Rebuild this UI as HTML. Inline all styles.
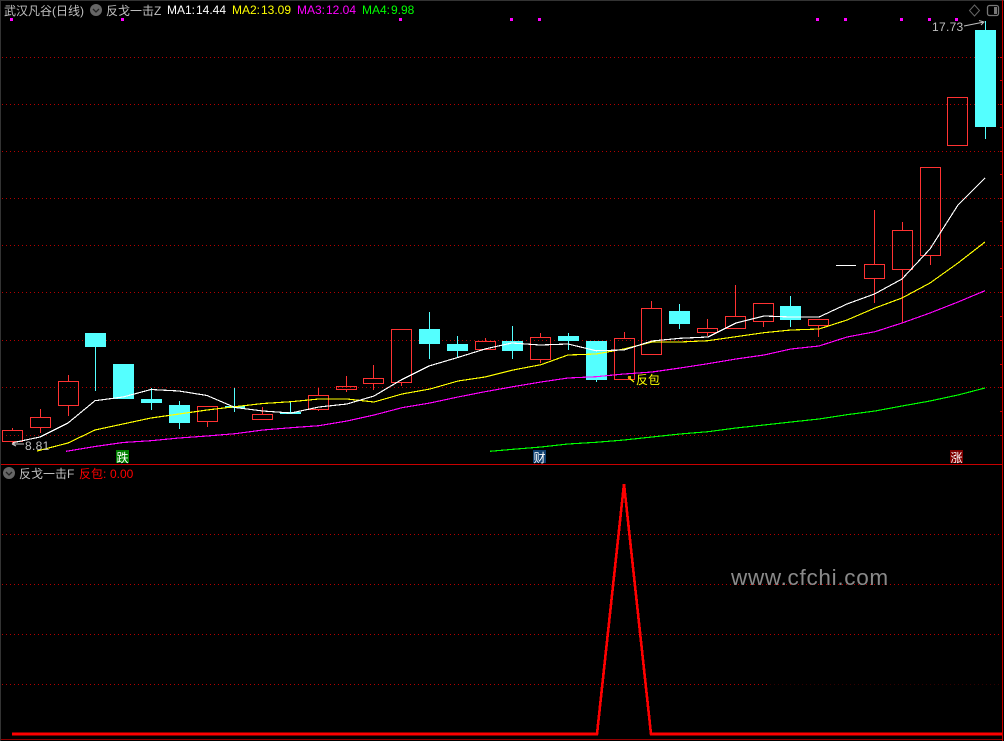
<!DOCTYPE html>
<html><head><meta charset="utf-8"><style>
html,body{margin:0;padding:0;background:#000}
body{width:1004px;height:741px;overflow:hidden}
svg{display:block}
text{font-family:"Liberation Sans","WenQuanYi Zen Hei","Noto Sans CJK SC",sans-serif;font-size:12px}
.r rect{fill:none;stroke:#ff3232;stroke-width:1}
.r path{stroke:#ff3232;fill:none}
.c rect{fill:#54ffff;stroke:none}
.c path{stroke:#54ffff;fill:none}
.g path{stroke:#b40000;stroke-dasharray:1 3;fill:none}
.m rect{fill:#ff00ff}
.ma{fill:none;stroke-width:1.15;shape-rendering:crispEdges}
</style></head><body>
<svg width="1004" height="741" viewBox="0 0 1004 741" xmlns="http://www.w3.org/2000/svg">
<rect width="1004" height="741" fill="#000"/>
<path d="M0.5 0V741" stroke="#333"/><path d="M0 0.5H1004" stroke="#333"/>

<g class="g" shape-rendering="crispEdges">
<path d="M2 57.5H1002"/><path d="M2 104.5H1002"/><path d="M2 151.5H1002"/><path d="M2 198.5H1002"/><path d="M2 245.5H1002"/><path d="M2 292.5H1002"/><path d="M2 340.5H1002"/><path d="M2 387.5H1002"/><path d="M2 435.5H1002"/>
<path d="M2 534.5H1002"/><path d="M2 584.5H1002"/><path d="M2 634.5H1002"/><path d="M2 684.5H770"/>
<path d="M770 684.5H1002" style="stroke:#300"/>
</g>

<g class="m" shape-rendering="crispEdges">
<rect x="10" y="18" width="3" height="3"/><rect x="121" y="18" width="3" height="3"/><rect x="399" y="18" width="3" height="3"/><rect x="510" y="18" width="3" height="3"/><rect x="538" y="18" width="3" height="3"/><rect x="816" y="18" width="3" height="3"/><rect x="844" y="18" width="3" height="3"/><rect x="900" y="18" width="3" height="3"/><rect x="928" y="18" width="3" height="3"/><rect x="955" y="18" width="3" height="3"/>
</g>

<!-- red candles -->
<g class="r" shape-rendering="crispEdges">
<path d="M12.5 428V431M12.5 441V444"/><rect x="2.5" y="430.5" width="20" height="11"/>
<path d="M40.5 409V417M40.5 428V433"/><rect x="30.5" y="417.5" width="20" height="10"/>
<path d="M68.5 375V381M68.5 405V416"/><rect x="58.5" y="381.5" width="20" height="24"/>
<path d="M207.5 421V427"/><rect x="197.5" y="406.5" width="20" height="15"/>
<path d="M262.5 407V414"/><rect x="252.5" y="414.5" width="20" height="5"/>
<path d="M318.5 388V395M318.5 409V411"/><rect x="308.5" y="395.5" width="20" height="14"/>
<path d="M346.5 376V386M346.5 390V392"/><rect x="336.5" y="386.5" width="20" height="3"/>
<path d="M373.5 365V378M373.5 383V390"/><rect x="363.5" y="378.5" width="20" height="5"/>
<path d="M401.5 382V386"/><rect x="391.5" y="329.5" width="20" height="53"/>
<path d="M485.5 338V341"/><rect x="475.5" y="341.5" width="20" height="8"/>
<path d="M540.5 333V337M540.5 359V363"/><rect x="530.5" y="337.5" width="20" height="22"/>
<path d="M624.5 332V338"/><rect x="614.5" y="338.5" width="20" height="41"/>
<path d="M651.5 301V308"/><rect x="641.5" y="308.5" width="20" height="46"/>
<path d="M707.5 319V328M707.5 333V336"/><rect x="697.5" y="328.5" width="20" height="4"/>
<path d="M735.5 285V316"/><rect x="725.5" y="316.5" width="20" height="12"/>
<path d="M763.5 321V327"/><rect x="753.5" y="303.5" width="20" height="18"/>
<path d="M818.5 325V337"/><rect x="808.5" y="319.5" width="20" height="6"/>
<path d="M874.5 210V264M874.5 278V303"/><rect x="864.5" y="264.5" width="20" height="14"/>
<path d="M902.5 222V230M902.5 269V323"/><rect x="892.5" y="230.5" width="20" height="39"/>
<path d="M930.5 255V265"/><rect x="920.5" y="167.5" width="20" height="88"/>
<rect x="947.5" y="97.5" width="20" height="48"/>
</g>
<!-- cyan candles -->
<g class="c" shape-rendering="crispEdges">
<path d="M95.5 347V391"/><rect x="85" y="333" width="21" height="14"/>
<rect x="113" y="364" width="21" height="35"/>
<path d="M151.5 388V410"/><rect x="141" y="399" width="21" height="4"/>
<path d="M179.5 401V429"/><rect x="169" y="405" width="21" height="18"/>
<path d="M234.5 388V412"/><rect x="225" y="406" width="20" height="2"/>
<path d="M290.5 402V412"/><rect x="280" y="412" width="21" height="2"/>
<path d="M429.5 312V359"/><rect x="419" y="329" width="21" height="15"/>
<path d="M457.5 336V358"/><rect x="447" y="344" width="21" height="7"/>
<path d="M512.5 326V359"/><rect x="502" y="341" width="21" height="10"/>
<path d="M568.5 333V350"/><rect x="558" y="336" width="21" height="5"/>
<path d="M596.5 380V382"/><rect x="586" y="341" width="21" height="39"/>
<path d="M679.5 304V329"/><rect x="669" y="311" width="21" height="13"/>
<path d="M790.5 296V327"/><rect x="780" y="306" width="21" height="14"/>
<path d="M985.5 21V139"/><rect x="975" y="30" width="21" height="97"/>
</g>
<path d="M836 265.5H856" stroke="#fff" shape-rendering="crispEdges"/>

<!-- MA lines -->
<polyline class="ma" stroke="#00ff00" points="490,451.3 513,449.3 541,447 568,444 596,442.3 624,440 652,437 680,434 708,431.7 736,428 764,425 791,422 819,419 847,414.7 875,411 902,406 930,401 958,395 985,388"/>
<polyline class="ma" stroke="#ff00ff" points="66,451.3 95,446.5 123,442.5 151,440.7 179,438 207,436 235,433.7 263,430 291,427.7 319,425.7 347,421 374,415 402,407.7 430,403 458,397 485,391.7 513,386.7 541,382 568,378 596,376.7 624,374 652,372 680,368 708,363.7 736,359 764,355 791,349 819,346 847,337 875,331.7 902,323 930,313 958,302 985,290.7"/>
<polyline class="ma" stroke="#ffff00" points="37,451 68,443 95,430 123,424 151,418 179,414 207,410 235,406.7 263,403.5 291,401.7 319,399 347,399 374,402 402,394 430,389 458,381 485,377 513,370 541,364.7 568,355 596,354 624,349 652,342 680,342 708,340.7 736,336.7 764,332.7 791,330 819,329 847,320 875,308 902,298 930,283 958,263 985,242"/>
<polyline class="ma" stroke="#ffffff" points="13,442.7 40,437 68,423 95,400.7 123,397 151,389.5 179,391 207,395.5 235,407.5 263,411 291,413 319,407 347,404 374,396 401,380 429,366 457,357.7 485,349 512,343 540,345 568,344 596,350.7 624,350 652,341 680,338.3 708,337 736,323 764,316 791,317 819,317 847,304 874.5,294 902,279 930,249 958,205 985,178"/>

<!-- frames -->
<g shape-rendering="crispEdges">
<path d="M1002.5 0V741" stroke="#c80000"/>
<path d="M1 464.5H1002" stroke="#c80000"/>
<path d="M1 739.5H1002" stroke="#900000"/>
<path d="M1000 57.5h2M1000 80.5h2M1000 104.5h2M1000 127.5h2M1000 151.5h2M1000 174.5h2M1000 198.5h2M1000 221.5h2M1000 245.5h2M1000 268.5h2M1000 292.5h2M1000 316.5h2M1000 340.5h2M1000 364.5h2M1000 387.5h2M1000 411.5h2M1000 435.5h2" stroke="#c80000"/>
</g>

<!-- F line -->
<polyline points="12,734 597,734 624,484 651,734 1002,734" fill="none" stroke="#ff0000" stroke-width="2.6" shape-rendering="crispEdges"/>

<!-- header -->
<text x="4" y="15" fill="#c0c0c0">武汉凡谷(日线)</text>
<circle cx="96" cy="10" r="6" fill="#666"/>
<path d="M93 9l3 3 3-3" stroke="#222" stroke-width="1.3" fill="none"/>
<text x="106" y="15" fill="#c0c0c0">反戈一击Z</text>
<text x="167" y="14" fill="#fff">MA1:</text><text x="196" y="14" fill="#fff">14.44</text>
<text x="232" y="14" fill="#ff0">MA2:</text><text x="261" y="14" fill="#ff0">13.09</text>
<text x="297" y="14" fill="#f0f">MA3:</text><text x="326" y="14" fill="#f0f">12.04</text>
<text x="362" y="14" fill="#0f0">MA4:</text><text x="391" y="14" fill="#0f0">9.98</text>

<!-- top right icons -->
<path d="M974.5 5l5 5.5-5 5.5-5-5.5z" fill="none" stroke="#666"/>
<rect x="987.5" y="5.5" width="11" height="10" rx="2" fill="none" stroke="#777" stroke-width="1.3"/>
<rect x="994" y="7" width="3" height="7" fill="#777"/>

<!-- labels -->
<text x="932" y="31" fill="#c0c0c0" letter-spacing=".3">17.73</text>
<path d="M964 26l20-4M979 20.5l5 1.500-3 3" fill="none" stroke="#c0c0c0"/>
<text x="25" y="450" fill="#c0c0c0" letter-spacing=".3">8.81</text>
<path d="M12 444h12M12 444l4-2M12 444l4 2" fill="none" stroke="#c0c0c0"/>
<path d="M628 377l6 5" stroke="#ff0" stroke-width="1.2"/><rect x="628" y="376" width="3" height="3" fill="#d8a800"/>
<text x="636" y="384" fill="#ff0">反包</text>

<!-- tags -->
<rect x="116" y="450" width="13" height="13" fill="#007f00"/>
<text x="116.500" y="462" fill="#fff" style="font-size:12px">跌</text>
<rect x="533" y="450" width="13" height="13" fill="#0f3f6f"/>
<text x="533.500" y="462" fill="#fff" style="font-size:12px">财</text>
<rect x="950" y="450" width="13" height="13" fill="#7f0000"/>
<text x="950.500" y="462" fill="#fff" style="font-size:12px">涨</text>

<!-- lower header -->
<circle cx="9" cy="473" r="6" fill="#666"/>
<path d="M6 472l3 3 3-3" stroke="#222" stroke-width="1.3" fill="none"/>
<text x="19" y="478" fill="#c0c0c0">反戈一击F</text>
<text x="79" y="478" fill="#f00">反包:</text>
<text x="110" y="478" fill="#f00">0.00</text>

<text x="731" y="585" fill="#8a8a8a" style="font-size:22.5px" letter-spacing=".7">www.cfchi.com</text>
</svg>
</body></html>
